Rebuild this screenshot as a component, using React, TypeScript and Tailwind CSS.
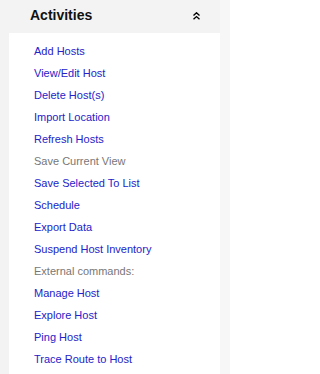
import React from "react";

const items = [
  { label: "Add Hosts" },
  { label: "View/Edit Host" },
  { label: "Delete Host(s)" },
  { label: "Import Location" },
  { label: "Refresh Hosts" },
  { label: "Save Current View", disabled: true },
  { label: "Save Selected To List" },
  { label: "Schedule" },
  { label: "Export Data" },
  { label: "Suspend Host Inventory" },
  { label: "External commands:", disabled: true },
  { label: "Manage Host" },
  { label: "Explore Host" },
  { label: "Ping Host" },
  { label: "Trace Route to Host" },
];

const App = () => {
  return (
    <div
      className="h-[374px] w-[230px] bg-[#f3f3f3] flex overflow-hidden"
      style={{ fontFamily: '"Liberation Sans", Arial, sans-serif' }}
    >
      <div className="w-[220px] flex flex-col">
        {/* Header */}
        <div className="h-[33px] flex items-center justify-between pl-[30px] pr-[20px]">
          <h2 className="text-[14px] font-bold text-[#111] pb-[2px]">Activities</h2>
          <svg width="7" height="8" viewBox="0 0 7 8" className="mb-[2px]">
            <path d="M0.5 3.5 L3.5 0.8 L6.5 3.5 M0.5 7.3 L3.5 4.6 L6.5 7.3" stroke="#000" strokeWidth="1.4" fill="none" />
          </svg>
        </div>

        {/* Links */}
        <div className="flex-1 bg-white ml-[9px] pt-[7px]">
          {items.map((it) => (
            <div
              key={it.label}
              className={`h-[22px] flex items-center pl-[25px] text-[11px] ${
                it.disabled ? "text-[#777]" : "text-[#2323c8] cursor-pointer hover:underline"
              }`}
            >
              {it.label}
            </div>
          ))}
        </div>
      </div>
      <div className="flex-1 bg-[#f7f7f7]" />
    </div>
  );
};

export default App;
